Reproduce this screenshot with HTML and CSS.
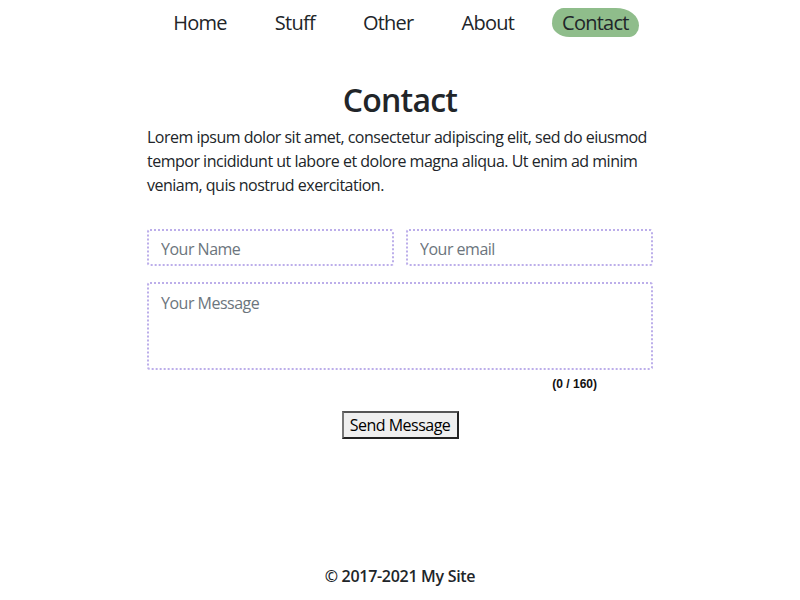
FILE: index.html
```html
<!DOCTYPE html>
<html lang="en">
<head>
<meta charset="utf-8">
<title>Contact</title>
<link rel="stylesheet" href="styles.css">
</head>
<body>
<nav class="nav">
  <a class="nav-link" href="#">Home</a>
  <a class="nav-link" href="#">Stuff</a>
  <a class="nav-link" href="#">Other</a>
  <a class="nav-link" href="#">About</a>
  <a class="nav-link active" href="#">Contact</a>
</nav>
<main class="main">
  <h1 class="title">Contact</h1>
  <p class="intro">Lorem ipsum dolor sit amet, consectetur adipiscing elit, sed do eiusmod tempor incididunt ut labore et dolore magna aliqua. Ut enim ad minim veniam, quis nostrud exercitation.</p>
  <form class="form">
    <div class="row">
      <input class="field" type="text" placeholder="Your Name">
      <input class="field" type="email" placeholder="Your email">
    </div>
    <textarea class="field message" placeholder="Your Message"></textarea>
    <div class="counter">(0 / 160)</div>
    <div class="actions"><button class="send" type="button">Send Message</button></div>
  </form>
</main>
<footer class="footer">© 2017-2021 My Site</footer>
</body>
</html>
```
FILE: styles.css
```css
html, body { height: 100%; }
body {
  margin: 0;
  font-family: "Open Sans", "Noto Sans", sans-serif;
  color: #212529;
  background: #fff;
  display: flex;
  flex-direction: column;
  align-items: center;
}
.nav {
  display: flex;
  justify-content: center;
  padding-top: 8px;
  padding-left: 2px;
}
.nav-link {
  font-size: 20px;
  font-weight: 400;
  letter-spacing: -0.75px;
  line-height: 29px;
  padding: 0 10px;
  margin: 0 14px;
  color: #212529;
  text-decoration: none;
}
.nav-link.active {
  background: #8fbd8b;
  border-radius: 12px 24px 10px 18px / 16px 18px 12px 14px;
}
.main {
  width: 506px;
  display: flex;
  flex-direction: column;
}
.title {
  margin: 43px 0 0;
  text-align: center;
  font-size: 32px;
  font-weight: 600;
  line-height: 40px;
  letter-spacing: -0.8px;
}
.intro {
  margin: 5px 0 0;
  font-size: 16px;
  line-height: 24px;
  letter-spacing: -0.5px;
}
.form {
  margin-top: 32px;
  display: flex;
  flex-direction: column;
}
.row {
  display: flex;
  gap: 12px;
}
.field {
  box-sizing: border-box;
  border: 2px dotted #bcaeea;
  border-radius: 3px;
  font-family: "Open Sans", "Noto Sans", sans-serif;
  font-size: 16px;
  letter-spacing: -0.5px;
  color: #212529;
  padding: 7px 12px 5px;
  outline: none;
  background: #fff;
}
.row .field {
  flex: 1;
  min-width: 0;
  height: 37px;
}
.field::placeholder { color: #6c757d; opacity: 1; }
.message {
  margin-top: 16px;
  height: 88px;
  resize: none;
  padding-top: 8px;
}
.counter {
  margin-top: 6px;
  padding-right: 56px;
  text-align: right;
  font-family: "Liberation Sans", Arial, sans-serif;
  font-size: 12px;
  font-weight: 700;
  line-height: 16px;
  color: #111;
}
.actions {
  display: flex;
  justify-content: center;
  margin-top: 19px;
}
.send {
  font-family: "Open Sans", "Noto Sans", sans-serif;
  font-size: 16px;
  letter-spacing: -0.5px;
  white-space: nowrap;
  color: #000;
  background: #efefef;
  border: 2px solid;
  border-color: #555 #222 #222 #777;
  padding: 0 5px;
  height: 28px;
  width: 117px;
  line-height: 22px;
}
.footer {
  margin-top: auto;
  padding-bottom: 12px;
  font-size: 16px;
  font-weight: 600;
  letter-spacing: -0.3px;
  line-height: 24px;
}
```
